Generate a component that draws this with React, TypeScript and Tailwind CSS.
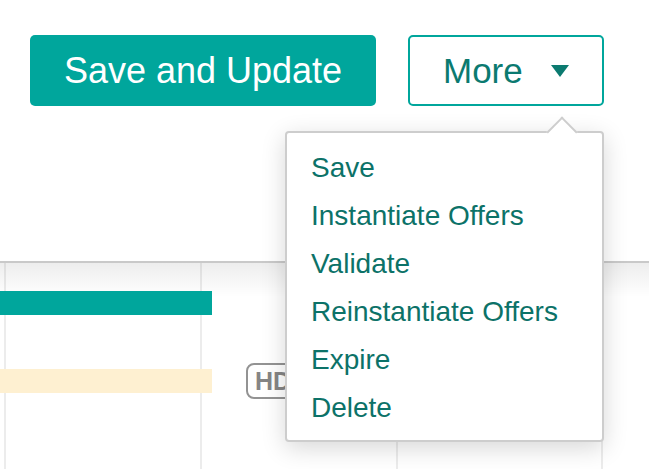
import React from "react";

const menuItems = ["Save", "Instantiate Offers", "Validate", "Reinstantiate Offers", "Expire", "Delete"];
const columns = [196, 196, 205, 196];

export default function App() {
    return (
        <div className="relative w-[649px] h-[469px] overflow-hidden bg-white font-['Liberation_Sans',Arial,sans-serif]">
            {/* toolbar */}
            <div className="h-[263px] border-b-2 border-[#c9c9c9] flex items-start gap-[32px] pl-[30px] pt-[35px]">
                <button className="w-[346px] h-[71px] rounded-[5px] bg-[#00a69c] text-white text-[36px] leading-none flex items-center justify-center">
                    Save and Update
                </button>
                <button className="w-[196px] h-[71px] rounded-[5px] border-2 border-[#00a69c] text-[#0b7a70] text-[35px] leading-none flex items-center justify-between pl-[33px] pr-[33px]">
                    <span>More</span>
                    <svg width="18" height="12" viewBox="0 0 18 12">
                        <path d="M0 0 H18 L9 12 Z" fill="#0b7a70" />
                    </svg>
                </button>
            </div>

            {/* timeline */}
            <div className="relative h-[206px]">
                <div className="absolute inset-0 flex pl-[4px]">
                    {columns.map((w, i) => (
                        <div key={i} style={{ width: w }} className="shrink-0 border-l-2 border-[#ececec]" />
                    ))}
                </div>
                <div className="absolute inset-x-0 top-0 h-[34px] bg-gradient-to-b from-black/[0.07] to-transparent" />
                <div className="relative flex flex-col pt-[28px] gap-[48px]">
                    <div className="w-[212px] h-[24px] bg-[#00a69c]" />
                    <div className="flex items-center gap-[34px]">
                        <div className="w-[212px] h-[24px] bg-[#fef0d1]" />
                        <span className="h-[36px] px-[7px] rounded-[8px] border-2 border-[#939393] text-[#858585] text-[25px] font-bold leading-none flex items-center">
                            HD
                        </span>
                    </div>
                </div>
            </div>

            {/* dropdown */}
            <div className="absolute left-[285px] top-[131px] w-[319px] h-[311px] rounded-[4px] border-2 border-[#cdcdcd] bg-white shadow-[0_6px_24px_rgba(0,0,0,0.16)]">
                <div className="absolute left-[264px] top-[-12px] w-[22px] h-[22px] rotate-45 bg-white border-l-2 border-t-2 border-[#cdcdcd]" />
                <ul className="relative flex flex-col pt-[11px] pl-[24px]">
                    {menuItems.map((item) => (
                        <li key={item} className="h-[48px] flex items-center text-[28px] text-[#0c7268]">
                            {item}
                        </li>
                    ))}
                </ul>
            </div>
        </div>
    );
}
